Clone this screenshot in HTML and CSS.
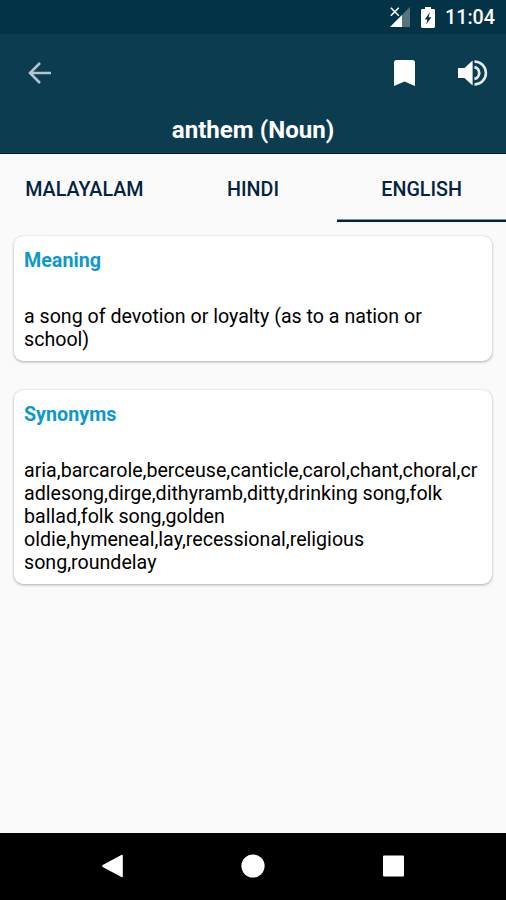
FILE: index.html
```html
<!DOCTYPE html>
<html lang="en">
<head>
<meta charset="utf-8">
<title>anthem (Noun)</title>
<link rel="stylesheet" href="styles.css">
</head>
<body>
<div class="status">
  <svg class="signal" width="20" height="20" viewBox="0 0 20 20"><path d="M20 0V20H0Z" fill="#54757f"/><path d="M12 8V20H0Z" fill="#fff"/><path d="M1 .8 8.6 8.4M8.6 .8 1 8.4" stroke="#023346" stroke-width="4"/><path d="M.8 .8 8.8 8.8M8.8 .8 .8 8.8" stroke="#fff" stroke-width="1.6"/></svg>
  <svg class="battery" width="14" height="21" viewBox="0 0 14 21"><path d="M4 0H10V2H12.7Q14 2 14 3.4V19.6Q14 21 12.7 21H1.3Q0 21 0 19.6V3.4Q0 2 1.3 2H4Z" fill="#fff"/><path d="M8.8 5.2 7.6 10.2H10.4L5.2 17.6 6.4 12.4H3.8Z" fill="#023346"/></svg>
  <span class="time">11:04</span>
</div>
<header class="header">
  <div class="toolbar">
    <svg class="back" width="24" height="24" viewBox="0 0 24 24" fill="none" stroke="#b5c3ca" stroke-width="2.6"><path d="M24 12H3.6M13 2 3 12 13 22"/></svg>
    <svg class="bookmark" width="21" height="26" viewBox="0 0 21 26"><path d="M2.5 0H18.5Q21 0 21 2.5V26L10.5 21.6 0 26V2.5Q0 0 2.5 0Z" fill="#fff"/></svg>
    <svg class="volume" width="30" height="26" viewBox="0 0 30 26"><path d="M0 8H6.5L14.6 .4V25.6L6.5 18H0Z" fill="#fff"/><path d="M16.4 7.2A5.9 5.9 0 0 1 16.4 18.8" fill="none" stroke="#e4eaec" stroke-width="2.8"/><path d="M16.4 1.5A11.5 11.5 0 0 1 16.4 24.5" fill="none" stroke="#e4eaec" stroke-width="2.6"/></svg>
  </div>
  <h1 class="title">anthem (Noun)</h1>
</header>
<nav class="tabs">
  <div class="tab">MALAYALAM</div>
  <div class="tab">HINDI</div>
  <div class="tab active">ENGLISH</div>
</nav>
<main class="content">
  <section class="card">
    <h2>Meaning</h2>
    <p>a song of devotion or loyalty (as to a nation or<br>school)</p>
  </section>
  <section class="card">
    <h2>Synonyms</h2>
    <p>aria,barcarole,berceuse,canticle,carol,chant,choral,cr<br>adlesong,dirge,dithyramb,ditty,drinking song,folk<br>ballad,folk song,golden<br>oldie,hymeneal,lay,recessional,religious<br>song,roundelay</p>
  </section>
</main>
<footer class="navbar">
  <svg width="24" height="24" viewBox="0 0 24 24"><path d="M20.8 1.8V22.2L2.2 12Z" fill="#fff" stroke="#fff" stroke-width="2" stroke-linejoin="round"/></svg>
  <svg width="24" height="24" viewBox="0 0 24 24"><circle cx="12" cy="12" r="11.6" fill="#fff"/></svg>
  <svg width="24" height="24" viewBox="0 0 24 24"><rect x="2" y="1.5" width="21" height="21" rx="1" fill="#fff"/></svg>
</footer>
</body>
</html>
```
FILE: styles.css
```css
* { box-sizing: border-box; }
body {
  margin: 0;
  height: 900px;
  display: flex;
  flex-direction: column;
  background: #fafafa;
  color: #000;
  font-family: Roboto, sans-serif;
  overflow: hidden;
}
svg { display: block; flex: none; }
.status {
  height: 34px;
  flex: none;
  display: flex;
  align-items: center;
  justify-content: flex-end;
  padding-right: 11px;
  background: #023346;
  color: #fff;
}
.battery { margin-left: 11px; }
.time {
  margin-left: 10px;
  padding-top: 2px;
  font-size: 19.7px;
  line-height: 32px;
  font-weight: 500;
}
.header {
  height: 120px;
  flex: none;
  background: #0b3c4f;
  border-bottom: 1px solid #021c38;
}
.toolbar {
  height: 78px;
  display: flex;
  align-items: center;
  padding: 0 18px 0 27px;
}
.bookmark { margin-left: auto; }
.volume { margin-left: 43px; }
.title {
  margin: 0;
  text-align: center;
  color: #fff;
  font-size: 24.1px;
  line-height: 36px;
  font-weight: 700;
}
.tabs {
  height: 67px;
  flex: none;
  display: grid;
  grid-template-columns: repeat(3, 1fr);
}
.tab {
  height: 67.5px;
  padding-top: 1px;
  text-align: center;
  font-size: 19.7px;
  line-height: 70px;
  font-weight: 500;
  color: #042340;
}
.active { box-shadow: inset 0 -2.6px #042340; }
.content {
  flex: 1;
  padding: 15px 14px 0;
}
.card {
  background: #fff;
  border-radius: 9px;
  padding: 13px 10px 10px;
  margin-bottom: 29px;
  box-shadow: 0 1px 3px rgba(0, 0, 0, .3), 0 0 1px rgba(0, 0, 0, .15);
}
.card h2 {
  margin: 0 0 33px;
  font-size: 19.7px;
  line-height: 23px;
  font-weight: 700;
  color: #0c98d0;
}
.card p {
  margin: 0;
  font-size: 19.64px;
  line-height: 23px;
  white-space: nowrap;
}
.navbar {
  height: 67px;
  flex: none;
  display: flex;
  justify-content: space-between;
  align-items: center;
  padding: 0 101px 1px;
  background: #000;
}
```
